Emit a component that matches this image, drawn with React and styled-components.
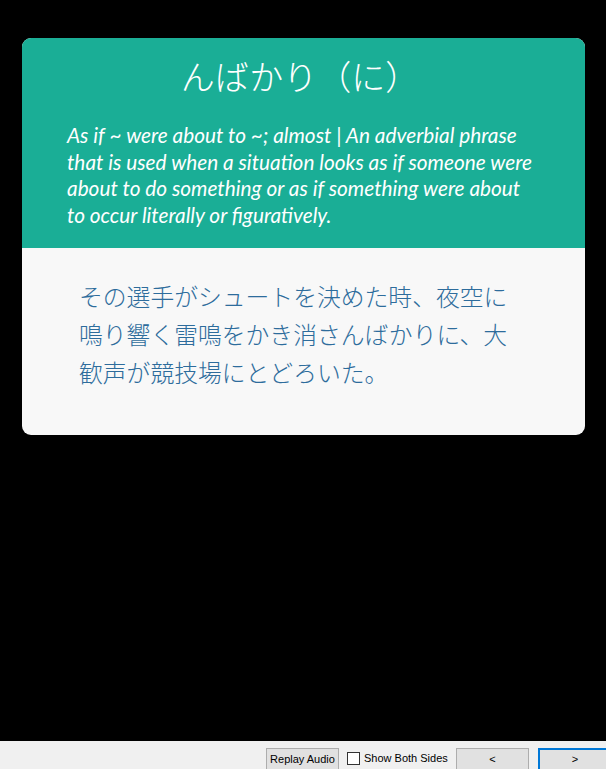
import React from "react";
import styled, { createGlobalStyle } from "styled-components";

const Global = createGlobalStyle`
  html, body { margin: 0; padding: 0; background: #000; }
  body { font-family: "Noto Sans", sans-serif; }
`;

const Page = styled.div`
  height: 100vh;
  display: flex;
  flex-direction: column;
  background: #000;
  overflow: hidden;
`;

const Stage = styled.div`
  flex: 1;
  padding: 38px 21px 0 22px;
`;

const Card = styled.div`
  width: 563px;
  border-radius: 9px;
  overflow: hidden;
  background: #f8f8f8;
`;

const Front = styled.div`
  background: #1aae96;
  color: #fff;
  padding: 16px 48px 20px 45px;
`;

const Title = styled.h1`
  margin: 0;
  text-align: center;
  font-family: "Noto Sans CJK JP", sans-serif;
  font-weight: 300;
  font-size: 34px;
  line-height: 44px;
  padding-right: 4px;
`;

const Meaning = styled.p`
  margin: 24px 0 0 0;
  font-family: Lato, "Open Sans", sans-serif;
  font-style: italic;
  font-size: 20.8px;
  line-height: 26.5px;
`;

const Back = styled.div`
  padding: 29px 57px 44px 57px;
`;

const Example = styled.p`
  margin: 0;
  font-family: "Noto Sans CJK JP", serif;
  font-weight: 300;
  font-size: 23.8px;
  line-height: 38px;
  color: #2d6c9c;
`;

const Bar = styled.div`
  height: 28px;
  flex: none;
  background: #f0f0f0;
  display: flex;
  align-items: flex-start;
  padding: 7px 0 0 266px;
  box-sizing: border-box;
  white-space: nowrap;
  overflow: hidden;
  font-family: "Liberation Sans", Arial, sans-serif;
  font-size: 11px;
  color: #000;
`;

const Button = styled.button`
  flex: none;
  height: 23px;
  width: ${(p) => p.$w}px;
  margin-left: ${(p) => p.$ml || 0}px;
  box-sizing: border-box;
  background: #e1e1e1;
  border: ${(p) => (p.$focus ? "2px solid #0078d7" : "1px solid #adadad")};
  font-family: inherit;
  font-size: 11px;
  color: #000;
  padding: 0 0 2px 0;
  text-align: center;
`;

const Check = styled.label`
  flex: none;
  display: flex;
  align-items: center;
  margin-left: 8px;
  height: 20px;
  width: 101px;
`;

const Box = styled.span`
  width: 13px;
  height: 13px;
  box-sizing: border-box;
  border: 1px solid #333;
  background: #fff;
  margin-right: 4px;
`;

export default function App() {
  return (
    <>
      <Global />
      <Page>
        <Stage>
          <Card>
            <Front>
              <Title>んばかり（に）</Title>
              <Meaning>
                As if ~ were about to ~; almost | An adverbial phrase that is used when a
                situation looks as if someone were about to do something or as if something
                were about to occur literally or figuratively.
              </Meaning>
            </Front>
            <Back>
              <Example>
                その選手がシュートを決めた時、夜空に鳴り響く雷鳴をかき消さんばかりに、大歓声が競技場にとどろいた。
              </Example>
            </Back>
          </Card>
        </Stage>
        <Bar>
          <Button $w={73}>Replay Audio</Button>
          <Check>
            <Box />
            Show Both Sides
          </Check>
          <Button $w={73} $ml={8}>&lt;</Button>
          <Button $w={74} $ml={9} $focus>&gt;</Button>
        </Bar>
      </Page>
    </>
  );
}
